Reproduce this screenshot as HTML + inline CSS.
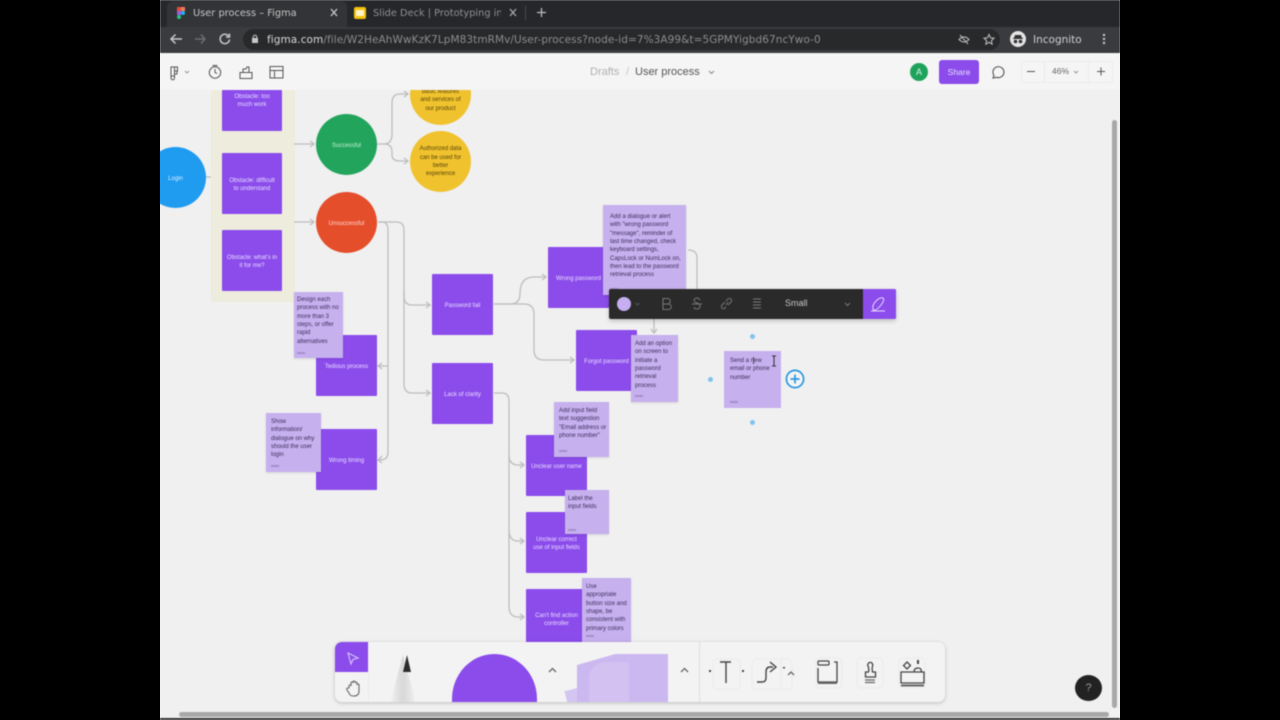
<!DOCTYPE html>
<html><head><meta charset="utf-8"><title>User process – Figma</title>
<style>
html,body{margin:0;padding:0;width:1280px;height:720px;background:#000;overflow:hidden;font-family:"Liberation Sans",sans-serif}
#app{position:absolute;left:160px;top:0;width:960px;height:720px;background:#f0f0f0;overflow:hidden}
.a{position:absolute}
.abs{position:absolute;left:-160px;top:0;width:1280px;height:720px}
#blur{filter:blur(.45px)}
.box{position:absolute;background:#8b4ceb;color:#e9dcff;display:flex;align-items:center;justify-content:center;text-align:center;font-size:6px;line-height:8.3px;border-radius:1px;box-sizing:border-box;padding:3px 4px 0}
.c{position:absolute;border-radius:50%;display:flex;align-items:center;justify-content:center;text-align:center;font-size:6px;line-height:8.3px;box-sizing:border-box;padding-top:3px}
.n{position:absolute;background:#c6b0ee;color:#3f2f5c;font-size:6px;line-height:8.35px;box-sizing:border-box;padding:4px 5px;box-shadow:0 1px 2px rgba(0,0,0,.12);white-space:nowrap}
.n i{position:absolute;left:5px;bottom:5px;width:8px;height:2px;background:#a58fcb;display:block}
.t{position:absolute;white-space:nowrap}
.dv{font-family:"DejaVu Sans",sans-serif}
</style></head><body>
<div id="app">
<div class="abs" id="blur">

<!-- canvas: frame -->
<div class="a" style="left:211px;top:90px;width:84px;height:212px;background:#eeecdc;border-radius:2px"></div>

<!-- connectors -->
<svg class="a" style="left:0;top:0" width="1280" height="720" fill="none" stroke="#bdbdbd" stroke-width="1.3">
<path d="M206 177H211"/>
<path d="M294 144H314M310 141l4 3-4 3"/>
<path d="M294 222H314M310 219l4 3-4 3"/>
<path d="M377 144H384Q392 144 392 134V103Q392 94 400 94H408M404 91l4 3-4 3"/>
<path d="M384 144Q392 144 392 152V155Q392 161 400 161H408M404 158l4 3-4 3"/>
<path d="M378 222H396Q404 222 404 230V296Q404 305 412 305H430M426 302l4 3-4 3"/>
<path d="M378 222H382Q388 222 388 230V452Q388 460 380 460H378M382 456l-4 4 4 3"/>
<path d="M388 366H378M382 363l-4 3 4 3"/>
<path d="M404 290V384Q404 393 412 393H430M426 390l4 3-4 3"/>
<path d="M494 304H510Q520 304 520 294Q520 277 534 277H546M542 274l4 3-4 3"/>
<path d="M494 304H524Q534 304 534 314V350Q534 360 544 360H574M570 357l4 3-4 3"/>
<path d="M494 393H502Q509 393 509 401V455Q509 465 518 465H524M520 462l4 3-4 3"/>
<path d="M509 455V530Q509 541 518 541H524M520 538l4 3-4 3"/>
<path d="M509 530V606Q509 617 518 617H524M520 614l4 3-4 3"/>
<path d="M688 250Q697 250 697 258V290"/>
<path d="M654 318V332M651 329l3 4 3-4"/>
</svg>

<!-- shapes -->
<div class="box" style="left:222px;top:90px;width:60px;height:41px;align-items:flex-start;padding-top:3px">Obstacle: too<br>much work</div>
<div class="box" style="left:222px;top:153px;width:60px;height:61px">Obstacle: difficult<br>to understand</div>
<div class="box" style="left:222px;top:230px;width:60px;height:61px">Obstacle: what's in<br>it for me?</div>

<div class="c" style="left:145px;top:147px;width:61px;height:61px;background:#1f9bf0;color:#d8efff">Login</div>
<div class="c" style="left:316px;top:114px;width:61px;height:61px;background:#22a45c;color:#c5f0d8">Successful</div>
<div class="c" style="left:316px;top:192px;width:61px;height:61px;background:#e54e2b;color:#ffd9cf">Unsuccessful</div>
<div class="c" style="left:410px;top:64px;width:61px;height:61px;background:#f0c22e;color:#5a4608;padding-top:12px">basic features<br>and services of<br>our product</div>
<div class="c" style="left:410px;top:131px;width:61px;height:61px;background:#f0c22e;color:#5a4608;padding-top:1px">Authorized data<br>can be used for<br>better<br>experience</div>

<div class="box" style="left:432px;top:274px;width:61px;height:61px">Password fail</div>
<div class="box" style="left:432px;top:363px;width:61px;height:61px">Lack of clarity</div>
<div class="box" style="left:316px;top:335px;width:61px;height:61px">Tedious process</div>
<div class="box" style="left:316px;top:429px;width:61px;height:61px">Wrong timing</div>
<div class="box" style="left:548px;top:247px;width:61px;height:61px">Wrong password</div>
<div class="box" style="left:576px;top:330px;width:61px;height:61px">Forgot password</div>
<div class="box" style="left:526px;top:435px;width:61px;height:61px">Unclear user name</div>
<div class="box" style="left:526px;top:512px;width:61px;height:61px">Unclear correct<br>use of input fields</div>
<div class="box" style="left:526px;top:589px;width:61px;height:61px;padding-top:1px">Can't find action<br>controller</div>

<!-- notes -->
<div class="n" style="left:294px;top:292px;width:49px;height:66px;padding:4px 3px">Design each<br>process with no<br>more than 3<br>steps, or offer<br>rapid<br>alternatives<i style="left:3px;bottom:4px"></i></div>
<div class="n" style="left:266px;top:413px;width:55px;height:59px;padding:5px 5px">Show<br>information/<br>dialogue on why<br>should the user<br>login<i></i></div>
<div class="n" style="left:603px;top:205px;width:83px;height:90px;padding:8px 7px">Add a dialogue or alert<br>with "wrong password<br>"message", reminder of<br>last time changed, check<br>keyboard settings,<br>CapsLock or NumLock on,<br>then lead to the password<br>retrieval process<i style="left:7px"></i></div>
<div class="n" style="left:631px;top:335px;width:47px;height:67px;padding:5px 4px">Add an option<br>on screen to<br>initiate a<br>password<br>retrieval<br>process<i style="left:4px"></i></div>
<div class="n" style="left:554px;top:402px;width:55px;height:55px;padding:5px 5px">Add input field<br>text suggestion<br>"Email address or<br>phone number"<i></i></div>
<div class="n" style="left:565px;top:490px;width:44px;height:44px;padding:5px 3px">Label the<br>input fields<i style="left:3px;bottom:3px"></i></div>
<div class="n" style="left:582px;top:578px;width:49px;height:64px;padding:5px 4px">Use<br>appropriate<br>button size and<br>shape, be<br>consistent with<br>primary colors<i style="left:4px"></i></div>
<div class="n" style="left:724px;top:351px;width:57px;height:57px;padding:6px 6px;box-shadow:none">Send a new<br>email or phone<br>number<i style="left:6px"></i></div>

<!-- selection -->
<div class="a" style="left:750px;top:334px;width:5px;height:5px;border-radius:50%;background:#7fc4ee"></div>
<div class="a" style="left:750px;top:420px;width:5px;height:5px;border-radius:50%;background:#7fc4ee"></div>
<div class="a" style="left:708px;top:377px;width:5px;height:5px;border-radius:50%;background:#7fc4ee"></div>
<svg class="a" style="left:785px;top:369px" width="20" height="20" fill="none" stroke="#2a97e0" stroke-width="1.7"><circle cx="10" cy="10" r="8.6" fill="#f4f4f4"/><path d="M5.500 10h9M10 5.500v9"/></svg>
<svg class="a" style="left:771px;top:355px" width="7" height="12" fill="none" stroke="#333" stroke-width="1"><path d="M1 1h4M3 1v10M1 11h4"/></svg>
<div class="a" style="left:753px;top:357px;width:1px;height:7px;background:#444"></div>

<!-- floating format toolbar -->
<div class="a" style="left:609px;top:289px;width:287px;height:30px;background:#2a2a2a;border-radius:2px;box-shadow:0 2px 5px rgba(0,0,0,.2)"></div>
<div class="a" style="left:863px;top:289px;width:33px;height:30px;background:#8b4ceb;border-radius:0 2px 2px 0"></div>
<div class="a" style="left:617px;top:297px;width:14px;height:14px;border-radius:50%;background:#c6aef2"></div>
<svg class="a" style="left:609px;top:289px" width="287" height="30" fill="none" stroke="#777" stroke-width="1">
<path d="M26.500 14l2 2 2-2" stroke="#555"/>
<path d="M54 9.500h4.500a2.500 2.500 0 0 1 0 5.500h-4.500zM54 15h5.500a2.600 2.600 0 0 1 0 5.500h-5.500z"/>
<path d="M83 15h10M91 11q-1-2-3-2t-3 2q0 2 3 3t3 3q0 3-3 3t-3-2"/>
<path d="M117 18l-1 1a2 2 0 0 1-3-3l3-3M117 12l2-2a2 2 0 0 1 3 3l-3 3M117 16l2-3"/>
<path d="M144 10h8M144 13h8M144 16h8M144 19h8"/>
<path d="M236 14l2.500 2.500 2.500-2.500"/>
<path d="M262 22h14M264 20q-1-4 3-8t7-3q2 2-2 7t-6 5q-1 1-2-1z" stroke="#e8d8ff"/>
</svg>
<div class="t" style="left:785px;top:298px;font-size:9px;line-height:11px;color:#c8c8c8">Small</div>

<!-- bottom toolbar -->
<div class="a" style="left:335px;top:642px;width:610px;height:60px;background:#f3f3f3;border-radius:7px;box-shadow:0 1px 4px rgba(0,0,0,.22);overflow:hidden">
  <div class="a" style="left:0;top:0;width:33px;height:30px;background:#8b4ceb"></div>
  <div class="a" style="left:33px;top:0;width:1px;height:60px;background:#ebebeb"></div>
  <div class="a" style="left:364px;top:0;width:1px;height:60px;background:#dedede"></div>
  <div class="a" style="left:117px;top:12px;width:85px;height:90px;border-radius:50%;background:#8b4ceb"></div>
  <div class="a" style="left:232px;top:46px;width:24px;height:24px;background:#d5c5f2;transform:rotate(-14deg)"></div>
  <div class="a" style="left:242px;top:12px;width:91px;height:50px;background:#cbb8f0;clip-path:polygon(0 22%,42% 0,100% 0,100% 100%,0 100%)"></div>
  <div class="a" style="left:254px;top:20px;width:40px;height:42px;background:#d2c1f1;border-radius:16px 0 0 0"></div>
</div>
<svg class="a" style="left:335px;top:642px" width="610" height="60" fill="none" stroke="#555" stroke-width="1.100">
<defs><linearGradient id="pg" x1="0" x2="1" y1="0" y2="0"><stop offset="0" stop-color="#f0f0f0"/><stop offset=".5" stop-color="#d8d8d8"/><stop offset="1" stop-color="#efefef"/></linearGradient></defs>
<path d="M13 11l10 5-5 1.500-2 4.500z" stroke="#d8c4ff"/>
<path d="M14 46v-2q0-1 1-1t1 1v-3q0-1 1-1t1 1v-1q0-1 1-1t1 1v1q0-1 1-1t1 1v2q0-1 1-1t1 1v6q0 5-5 5h-1q-3 0-4-3l-2-3q-1-2 1-2z" stroke="#666"/>
<path d="M68 13l5 18q4 14 7 29H56q3-15 7-29z" fill="url(#pg)" stroke="none"/>
<path d="M72 13l4 17h-8z" fill="#2b2b2b" stroke="none"/>
<path d="M214 30l3.500-3.500 3.500 3.500M346 30l3.500-3.500 3.500 3.500" stroke="#666" stroke-width="1.300"/>
<rect x="378" y="17" width="27" height="30" rx="4" stroke="#ebebeb"/>
<path d="M385 20h11M391 20v21" stroke="#444" stroke-width="1.400"/>
<path d="M375 28v2M408 28v2" stroke="#444" stroke-width="2"/>
<rect x="417" y="17" width="40" height="30" rx="4" stroke="#ebebeb"/>
<path d="M446 17v30" stroke="#ebebeb"/>
<path d="M422 40h5q4 0 4-4v-6q0-5 4-5h3M435 20l6 5-6 5" stroke="#444" stroke-width="1.400"/>
<path d="M449 25v1.500" stroke="#444" stroke-width="2"/>
<path d="M453 33l3-3 3 3" stroke="#666" stroke-width="1.300"/>
<rect x="481" y="16" width="26" height="30" rx="4" stroke="#ebebeb"/>
<path d="M483 26V40h19V20h-3" stroke="#444" stroke-width="1.300"/>
<path d="M483 41h19" stroke="#666" stroke-width="2"/>
<rect x="483" y="19" width="11" height="4" rx="1" stroke="#444" stroke-width="1.200"/>
<rect x="522" y="16" width="26" height="30" rx="4" stroke="#ebebeb"/>
<path d="M533 24a2.500 2.500 0 1 1 4.500 0q-.8 3 0 6h3v5h-10v-5h3q.8-3-.500-6z" stroke="#444" stroke-width="1.300"/>
<path d="M530 38h10M530 40.500h10" stroke="#666" stroke-width="1.300"/>
<rect x="564" y="16" width="26" height="30" rx="4" stroke="#ebebeb"/>
<path d="M566 30h23v11h-23z" stroke="#444" stroke-width="1.300"/>
<path d="M566 43.500h23" stroke="#666" stroke-width="2"/>
<path d="M579 30q0-4 4-4t3 4" stroke="#444" stroke-width="1.300"/>
<path d="M572 20l3.500 3.500-3.500 3.500-3.500-3.500z" stroke="#444" stroke-width="1.300"/>
<path d="M583 18v4" stroke="#444" stroke-width="2"/>
</svg>

<!-- scrollbars -->
<div class="a" style="left:1112px;top:120px;width:5px;height:588px;border-radius:3px;background:#a8a8a8"></div>
<div class="a" style="left:179px;top:712px;width:930px;height:5px;border-radius:3px;background:#a8a8a8"></div>
<div class="a" style="left:160px;top:718px;width:960px;height:2px;background:#333"></div>

<!-- help -->
<div class="a" style="left:1075px;top:675px;width:27px;height:26px;border-radius:50%;background:#222;color:#999;font-size:11px;line-height:26px;text-align:center">?</div>

<!-- figma header -->
<div class="a" style="left:160px;top:53px;width:960px;height:37px;background:#f5f5f5"></div>
<svg class="a" style="left:160px;top:53px" width="140" height="37" fill="none" stroke="#555" stroke-width="1">
<path d="M11 14h3.500v9h-3.500zM14.500 14h3v4h-3zM14.500 18h2.500v3h-2.500zM11 23h3.500v2a1.700 1.700 0 0 1-3.500 0z"/>
<path d="M25 18l2 2 2-2" stroke="#999"/>
<circle cx="55" cy="19.500" r="5.700"/><path d="M52.500 12.500h5M55 16v3.500l2 1"/>
<path d="M80 19.500h12v6H80zM83 19.500v-3.500h3l1-2h2v5.500" />
<path d="M110 13.500h13v11.500h-13zM110 17.500h13M114.500 17.500v7.500"/>
</svg>
<div class="t" style="left:590px;top:66px;font-size:11px;line-height:13px;color:#b0b0b0">Drafts</div>
<div class="t" style="left:626px;top:66px;font-size:11px;line-height:13px;color:#c4c4c4">/</div>
<div class="t" style="left:635px;top:66px;font-size:11px;line-height:13px;color:#555">User process</div>
<svg class="a" style="left:708px;top:70px" width="7" height="5" fill="none" stroke="#888"><path d="M1 1l2.500 2.500L6 1"/></svg>
<div class="a" style="left:910px;top:63px;width:18px;height:18px;border-radius:50%;background:#1fa35c;color:#d6f3e2;font-size:9px;line-height:18px;text-align:center">A</div>
<div class="a" style="left:939px;top:60px;width:40px;height:24px;border-radius:3px;background:#8b4ceb;color:#e9dcff;font-size:8.500px;line-height:24px;text-align:center">Share</div>
<svg class="a" style="left:990px;top:64px" width="16" height="16" fill="none" stroke="#555" stroke-width="1.100"><path d="M3 14l1-2.600A5.500 5.500 0 1 1 6.500 13.300z"/></svg>
<div class="a" style="left:1021px;top:61px;width:92px;height:22px;border:1px solid #ececec;border-radius:2px;box-sizing:border-box"></div>
<div class="a" style="left:1044px;top:61px;width:1px;height:22px;background:#ececec"></div>
<div class="a" style="left:1088px;top:61px;width:1px;height:22px;background:#ececec"></div>
<svg class="a" style="left:1021px;top:61px" width="92" height="22" fill="none" stroke="#555" stroke-width="1"><path d="M6 10.500h8M76 10.500h8M80 6.500v8"/><path d="M53 10l2 2 2-2" stroke="#999"/></svg>
<div class="t" style="left:1052px;top:66px;font-size:8.500px;line-height:11px;color:#666">46%</div>

<!-- browser chrome -->
<div class="a" style="left:160px;top:0;width:960px;height:27px;background:#26272a"></div>
<div class="a" style="left:167px;top:1px;width:180px;height:26px;background:#333437;border-radius:6px 6px 0 0"></div>
<div class="a" style="left:160px;top:27px;width:960px;height:26px;background:#3a3b3e"></div>
<div class="a" style="left:243px;top:29px;width:757px;height:21px;border-radius:11px;background:#28292b"></div>
<svg class="a" style="left:177px;top:7px" width="8" height="12"><rect x="0" y="0" width="4" height="4" fill="#e2503a"/><rect x="4" y="0" width="4" height="4" fill="#ef7a5f"/><rect x="0" y="4" width="4" height="4" fill="#9b5ee8"/><circle cx="6" cy="6" r="2" fill="#1fb8f0"/><rect x="0" y="8" width="4" height="4" rx="2" fill="#1fc97c"/></svg>
<div class="t dv" style="left:193px;top:7px;font-size:9.800px;line-height:13px;color:#c6c6c6">User process – Figma</div>
<svg class="a" style="left:330px;top:8px" width="8" height="9" stroke="#ccc" stroke-width="1.300"><path d="M1 1l6 7M7 1l-6 7"/></svg>
<div class="a" style="left:354px;top:7px;width:12px;height:12px;border-radius:2px;background:#f4c20d"></div>
<div class="a" style="left:356px;top:10px;width:8px;height:6px;background:#fff3c4"></div>
<div class="t dv" style="left:373px;top:7px;width:128px;overflow:hidden;font-size:9.800px;line-height:13px;color:#8f9094">Slide Deck | Prototyping in UX</div>
<svg class="a" style="left:509px;top:8px" width="8" height="9" stroke="#aaa" stroke-width="1.300"><path d="M1 1l6 7M7 1l-6 7"/></svg>
<div class="a" style="left:525px;top:6px;width:1px;height:14px;background:#4a4b4e"></div>
<svg class="a" style="left:536px;top:7px" width="11" height="11" stroke="#bbb" stroke-width="1.300"><path d="M5.500 1v9M1 5.500h9"/></svg>
<svg class="a" style="left:168px;top:31px" width="70" height="16" fill="none" stroke-width="1.500"><path d="M14 8H3M7.500 3.500L3 8l4.500 4.500" stroke="#c8c8c8"/><path d="M27 8h10M33 3.500L37 8l-4 4.500" stroke="#6e6e70"/><path d="M60.500 5a4.700 4.700 0 1 0 1 3.500" stroke="#c8c8c8"/><path d="M61.500 2.500v3.500h-3.500" stroke="#c8c8c8"/></svg>
<svg class="a" style="left:251px;top:34px" width="8" height="10"><rect x="1" y="4" width="6" height="5" fill="#c8c8c8"/><path d="M2.200 4V3a1.800 1.800 0 0 1 3.600 0v1" fill="none" stroke="#c8c8c8"/></svg>
<div class="t dv" style="left:267px;top:33px;font-size:10.500px;line-height:14px;letter-spacing:.07px;color:#d8d8d8">figma.com<span style="color:#8c8d90">/file/W2HeAhWwKzK7LpM83tmRMv/User-process?node-id=7%3A99&amp;t=5GPMYigbd67ncYwo-0</span></div>
<svg class="a" style="left:958px;top:33px" width="38" height="13" fill="none" stroke="#b8b8b8" stroke-width="1.100"><path d="M1 6.500q5-5 10 0q-5 5-10 0zM2 2l8 9" /><path d="M31 1.500l1.500 3.300 3.500.4-2.600 2.400.7 3.500-3.100-1.800-3.100 1.800.7-3.500-2.600-2.400 3.500-.4z"/></svg>
<div class="a" style="left:1010px;top:31px;width:16px;height:16px;border-radius:50%;background:#e4e4e4"></div>
<svg class="a" style="left:1010px;top:31px" width="16" height="16" fill="#333"><path d="M3 7h10v1H3zM5 4h6l1 3H4z"/><circle cx="5.500" cy="10.500" r="1.800"/><circle cx="10.500" cy="10.500" r="1.800"/></svg>
<div class="t dv" style="left:1033px;top:33px;font-size:10.500px;line-height:14px;color:#cfcfcf">Incognito</div>
<svg class="a" style="left:1102px;top:33px" width="4" height="12" fill="#c8c8c8"><circle cx="2" cy="2" r="1.200"/><circle cx="2" cy="6" r="1.200"/><circle cx="2" cy="10" r="1.200"/></svg>
</div>
</div>
</body></html>
